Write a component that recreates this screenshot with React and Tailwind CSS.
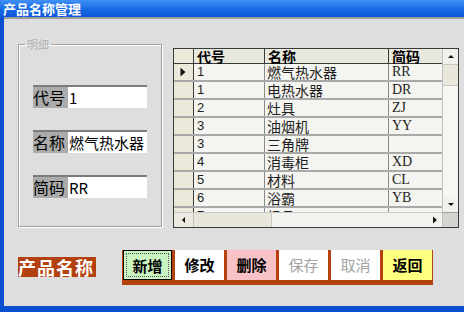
import React from 'react';

const rows = [
    ['1', '燃气热水器', 'RR'],
    ['1', '电热水器', 'DR'],
    ['2', '灶具', 'ZJ'],
    ['3', '油烟机', 'YY'],
    ['3', '三角牌', ''],
    ['4', '消毒柜', 'XD'],
    ['5', '材料', 'CL'],
    ['6', '浴霸', 'YB'],
    ['7', '畅品', ''],
];

const fields = [
    ['代号', '1'],
    ['名称', '燃气热水器'],
    ['简码', 'RR'],
];

const buttons = [
    { label: '新增', cls: 'bg-[#c9f3c1] text-black font-bold border border-black outline outline-1 outline-dotted outline-[#555] -outline-offset-[4px]' },
    { label: '修改', cls: 'bg-white text-black font-bold' },
    { label: '删除', cls: 'bg-[#f8c2c6] text-black font-bold' },
    { label: '保存', cls: 'bg-white text-[#a3a3a3]' },
    { label: '取消', cls: 'bg-white text-[#a3a3a3]' },
    { label: '返回', cls: 'bg-[#ffff82] text-black font-bold' },
];

function Tri({ dir, size = 8 }) {
    const pts = {
        up: '1,5 4,2 7,5',
        down: '1,2 4,5 7,2',
        left: '5,1 2,4 5,7',
        right: '2,0.5 6,4 2,7.5',
    }[dir];
    return (
        <svg width={size} height={size} viewBox="0 0 8 8">
            <polygon points={pts} fill="#111" />
        </svg>
    );
}

export default function App() {
    return (
        <div className="w-[464px] h-[312px] overflow-hidden flex flex-col bg-[#0b4fd3] font-['Noto_Sans_CJK_SC','Liberation_Sans',sans-serif]">
            {/* Title bar */}
            <div className="h-[17px] shrink-0 bg-gradient-to-b from-[#3f90f6] via-[#1b6de6] to-[#0b56d9] pl-[3px] text-white font-bold text-[13px] leading-[17px]">
                产品名称管理
            </div>

            <div className="flex-1 ml-[4px] mb-[6px] bg-[#dedede] border-t-2 border-[#9c9c9c] flex flex-col">
                <div className="flex items-start">
                    {/* Group box */}
                    <fieldset className="ml-[14px] mt-[18px] w-[144px] h-[190px] border border-[#a2a2a2] shadow-[inset_1px_1px_0_#fff,1px_1px_0_#fff]">
                        <legend className="ml-[6px] px-[2px] text-[11px] leading-[14px] text-[#b0b0b0]">明细</legend>
                        <div className="pl-[14px] pt-[34px] flex flex-col gap-[22px]">
                            {fields.map(([k, v]) => (
                                <div key={k} className="flex h-[23px] w-[114px] border-t-2 border-[#7c7c7c]">
                                    <div className="w-[35px] bg-[#ababab] text-[16px] leading-[21px] text-black">{k}</div>
                                    <div className="flex-1 bg-white text-[15px] leading-[21px] text-black pl-[1px] whitespace-nowrap overflow-hidden">{v}</div>
                                </div>
                            ))}
                        </div>
                    </fieldset>

                    {/* Data grid */}
                    <div className="ml-[11px] mt-[29px] w-[286px] h-[180px] border border-[#3a3a3a] flex bg-[#f4f4f0]">
                        <div className="w-[268px] flex flex-col">
                            <div className="flex-1 overflow-hidden">
                                <div className="flex h-[15px] bg-[#e9e8df] border-b border-[#3a3a3a] text-[14px] leading-[14px] font-bold text-black">
                                    <div className="w-[20px] border-r border-[#3a3a3a] bg-[#ebe9da]" />
                                    <div className="w-[71px] border-r border-[#3a3a3a] pl-[3px]">代号</div>
                                    <div className="w-[124px] border-r border-[#3a3a3a] pl-[3px]">名称</div>
                                    <div className="flex-1 pl-[3px]">简码</div>
                                </div>
                                {rows.map(([a, b, c], i) => (
                                    <div key={i} className="flex h-[18px] border-b-2 border-[#a9a9a9] text-[#1e1e1e]">
                                        <div className="w-[20px] border-r border-[#3a3a3a] bg-[#ebe9da] flex items-center pl-[4px]">
                                            {i === 0 && <Tri dir="right" size={10} />}
                                        </div>
                                        <div className="w-[71px] border-r border-[#8a8a8a] pl-[3px] text-[13px] leading-[16px] font-['Liberation_Sans',sans-serif]">{a}</div>
                                        <div className="w-[124px] border-r border-[#8a8a8a] pl-[2px] text-[14px] leading-[16px]">{b}</div>
                                        <div className="flex-1 pl-[3px] text-[14px] leading-[16px] font-['Liberation_Serif',serif]">{c}</div>
                                    </div>
                                ))}
                            </div>
                            {/* horizontal scrollbar */}
                            <div className="h-[15px] flex border-t border-[#c8c8c8] bg-[#f2f2ee]">
                                <div className="w-[20px] flex items-center justify-center bg-[#ebe9e0] border-r border-[#c0c0c0]"><Tri dir="left" /></div>
                                <div className="w-[78px] bg-[#e9e7dc] border-r border-[#c8c8c8]" />
                                <div className="flex-1" />
                                <div className="w-[15px] flex items-center justify-center"><Tri dir="right" /></div>
                            </div>
                        </div>
                        {/* vertical scrollbar */}
                        <div className="w-[16px] flex flex-col border-l border-[#c0c0c0]">
                            <div className="h-[15px] flex items-center justify-center bg-[#f0f0ec]"><Tri dir="up" /></div>
                            <div className="h-[22px] bg-[#e9e7dc] border-y border-[#c8c8c8]" />
                            <div className="flex-1 bg-[#f6f6f2]" />
                            <div className="h-[15px] flex items-center justify-center bg-[#f0f0ec]"><Tri dir="down" /></div>
                            <div className="h-[15px] bg-[#d4d4d0] border-t border-[#a0a0a0]" />
                        </div>
                    </div>
                </div>

                {/* Bottom toolbar */}
                <div className="flex items-start mt-[22px]">
                    <div className="ml-[14px] mt-[7px] w-[78px] h-[20px] bg-[#b3410f] text-white font-bold text-[18px] leading-[20px] tracking-[1px] whitespace-nowrap">
                        产品名称
                    </div>
                    <div className="ml-[26px] flex gap-[3px] bg-[#b5420e] pl-[1px] pr-[1px] pb-[5px]">
                        {buttons.map(b => (
                            <button key={b.label} className={`w-[49px] h-[30px] text-[15px] leading-[30px] ${b.cls}`}>
                                {b.label}
                            </button>
                        ))}
                    </div>
                </div>
            </div>
        </div>
    );
}
